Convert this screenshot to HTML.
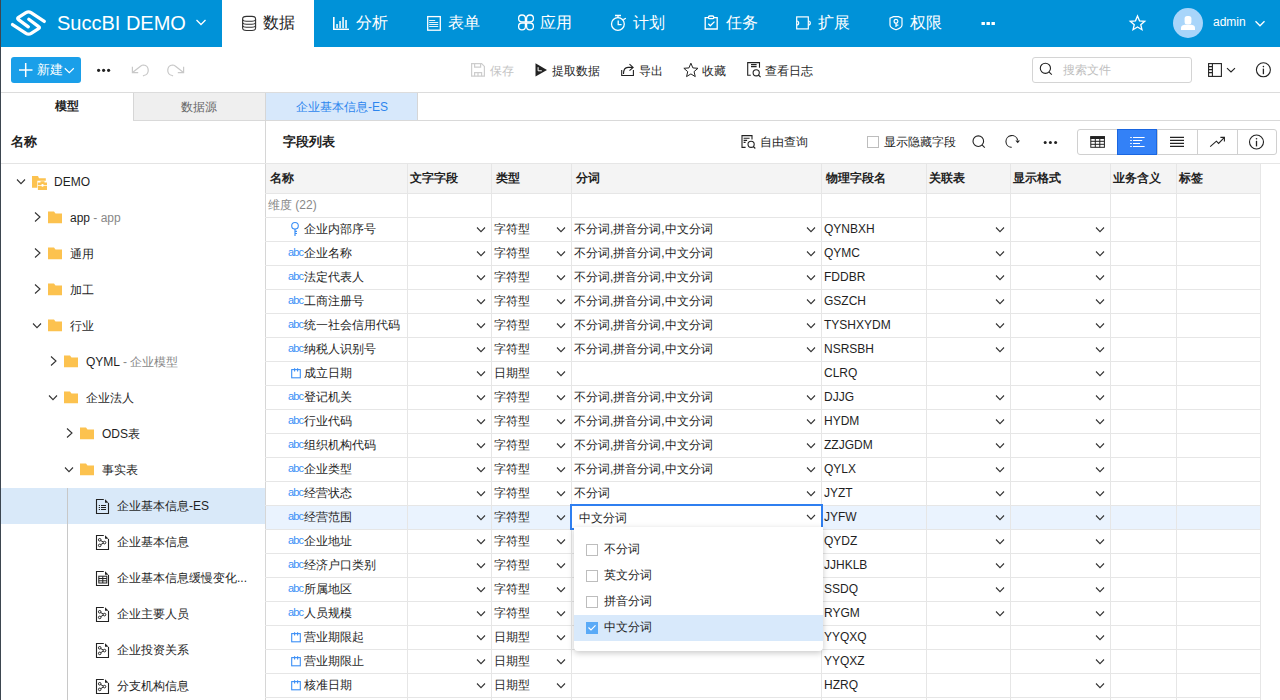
<!DOCTYPE html><html><head><meta charset="utf-8"><style>
*{box-sizing:border-box;margin:0;padding:0}
html,body{width:1280px;height:700px;overflow:hidden;background:#fff;font-family:"Liberation Sans",sans-serif;color:#1f1f1f}
.ab{position:absolute}
.t{position:absolute;white-space:nowrap;font-size:12px;line-height:17px}
svg{display:block}
</style></head><body>
<div class="ab" style="left:0;top:0;width:1280px;height:47px;background:#0092d8"></div>
<div class="t" style="left:57px;top:10px;font-size:20px;line-height:26px;color:#fff">SuccBI DEMO</div>
<div class="ab" style="left:222px;top:0;width:92px;height:47px;background:#fff"></div>
<div class="t" style="left:263px;top:12px;font-size:16px;line-height:22px;color:#222">数据</div>
<div class="t" style="left:356px;top:12px;font-size:16px;line-height:22px;color:#fff">分析</div>
<div class="t" style="left:448px;top:12px;font-size:16px;line-height:22px;color:#fff">表单</div>
<div class="t" style="left:540px;top:12px;font-size:16px;line-height:22px;color:#fff">应用</div>
<div class="t" style="left:633px;top:12px;font-size:16px;line-height:22px;color:#fff">计划</div>
<div class="t" style="left:726px;top:12px;font-size:16px;line-height:22px;color:#fff">任务</div>
<div class="t" style="left:818px;top:12px;font-size:16px;line-height:22px;color:#fff">扩展</div>
<div class="t" style="left:910px;top:12px;font-size:16px;line-height:22px;color:#fff">权限</div>
<div class="ab" style="left:1173px;top:8px;width:30px;height:30px;border-radius:50%;background:#a8d5fa"></div>
<div class="t" style="left:1213px;top:14px;font-size:12px;line-height:16px;color:#fff">admin</div>
<div class="ab" style="left:0;top:92px;width:1280px;height:1px;background:#dcdcdc"></div>
<div class="ab" style="left:11px;top:57px;width:70px;height:26px;border-radius:3px;background:#1a9fe9"></div>
<div class="t" style="left:37px;top:61px;font-size:13px;line-height:17px;color:#fff">新建</div>
<div class="t" style="left:490px;top:63px;color:#c4c4c4">保存</div>
<div class="t" style="left:552px;top:63px;color:#1f1f1f">提取数据</div>
<div class="t" style="left:639px;top:63px;color:#1f1f1f">导出</div>
<div class="t" style="left:702px;top:63px;color:#1f1f1f">收藏</div>
<div class="t" style="left:765px;top:63px;color:#1f1f1f">查看日志</div>
<div class="ab" style="left:1032px;top:57px;width:160px;height:26px;border:1px solid #d4d4d4;border-radius:3px"></div>
<div class="t" style="left:1063px;top:62px;color:#c0c0c0">搜索文件</div>
<div class="ab" style="left:133px;top:93px;width:132px;height:28px;background:#efefef;border-left:1px solid #d6d6d6;border-bottom:1px solid #d6d6d6"></div>
<div class="t" style="left:55px;top:98px;font-weight:bold;color:#222">模型</div>
<div class="t" style="left:181px;top:99px;color:#666">数据源</div>
<div class="t" style="left:11px;top:133px;font-size:13px;font-weight:bold;color:#222">名称</div>
<div class="ab" style="left:0;top:163px;width:265px;height:1px;background:#e4e4e4"></div>
<div class="ab" style="left:1px;top:488px;width:264px;height:36px;background:#d9e9f9"></div>
<div class="ab" style="left:67px;top:488px;width:1px;height:212px;background:#c8c8c8"></div>
<div class="t" style="left:54px;top:174px;">DEMO</div>
<div class="t" style="left:70px;top:210px;">app<span style="color:#888"> - app</span></div>
<div class="t" style="left:70px;top:246px;">通用</div>
<div class="t" style="left:70px;top:282px;">加工</div>
<div class="t" style="left:70px;top:318px;">行业</div>
<div class="t" style="left:86px;top:354px;">QYML<span style="color:#888"> - 企业模型</span></div>
<div class="t" style="left:86px;top:390px;">企业法人</div>
<div class="t" style="left:102px;top:426px;">ODS表</div>
<div class="t" style="left:102px;top:462px;">事实表</div>
<div class="t" style="left:117px;top:498px;">企业基本信息-ES</div>
<div class="t" style="left:117px;top:534px;">企业基本信息</div>
<div class="t" style="left:117px;top:570px;">企业基本信息缓慢变化...</div>
<div class="t" style="left:117px;top:606px;">企业主要人员</div>
<div class="t" style="left:117px;top:642px;">企业投资关系</div>
<div class="t" style="left:117px;top:678px;">分支机构信息</div>
<div class="ab" style="left:265px;top:93px;width:153px;height:27px;background:#d7e8fb;border-right:1px solid #d6d6d6"></div>
<div class="t" style="left:296px;top:99px;color:#2d86ee">企业基本信息-ES</div>
<div class="ab" style="left:133px;top:120px;width:1147px;height:1px;background:#d9d9d9"></div>
<div class="ab" style="left:265px;top:93px;width:1px;height:607px;background:#d6d6d6"></div>
<div class="t" style="left:283px;top:133px;font-size:13px;font-weight:bold;color:#222">字段列表</div>
<div class="t" style="left:760px;top:134px">自由查询</div>
<div class="ab" style="left:867px;top:136px;width:12px;height:12px;border:1px solid #bdbdbd"></div>
<div class="t" style="left:884px;top:134px">显示隐藏字段</div>
<div class="ab" style="left:1077px;top:129px;width:200px;height:26px;border:1px solid #d0d0d0;border-radius:3px"></div>
<div class="ab" style="left:1157px;top:129px;width:1px;height:26px;background:#d0d0d0"></div>
<div class="ab" style="left:1197px;top:129px;width:1px;height:26px;background:#d0d0d0"></div>
<div class="ab" style="left:1237px;top:129px;width:1px;height:26px;background:#d0d0d0"></div>
<div class="ab" style="left:1117px;top:129px;width:40px;height:26px;background:#3381f7;border:1px solid #1a66e0"></div>
<div class="ab" style="left:265px;top:163px;width:1015px;height:1px;background:#e6e6e6"></div>
<div class="ab" style="left:266px;top:164px;width:994px;height:29px;background:#f4f4f4"></div>
<div class="ab" style="left:266px;top:505px;width:994px;height:24px;background:#eaf3fe"></div>
<div class="ab" style="left:407px;top:164px;width:1px;height:536px;background:#e6e6e6"></div>
<div class="ab" style="left:491px;top:164px;width:1px;height:536px;background:#e6e6e6"></div>
<div class="ab" style="left:571px;top:164px;width:1px;height:536px;background:#e6e6e6"></div>
<div class="ab" style="left:821px;top:164px;width:1px;height:536px;background:#e6e6e6"></div>
<div class="ab" style="left:926px;top:164px;width:1px;height:536px;background:#e6e6e6"></div>
<div class="ab" style="left:1010px;top:164px;width:1px;height:536px;background:#e6e6e6"></div>
<div class="ab" style="left:1110px;top:164px;width:1px;height:536px;background:#e6e6e6"></div>
<div class="ab" style="left:1176px;top:164px;width:1px;height:536px;background:#e6e6e6"></div>
<div class="ab" style="left:1260px;top:164px;width:1px;height:536px;background:#e6e6e6"></div>
<div class="ab" style="left:265px;top:193px;width:995px;height:1px;background:#e6e6e6"></div>
<div class="ab" style="left:265px;top:217px;width:995px;height:1px;background:#e6e6e6"></div>
<div class="ab" style="left:265px;top:241px;width:995px;height:1px;background:#e6e6e6"></div>
<div class="ab" style="left:265px;top:265px;width:995px;height:1px;background:#e6e6e6"></div>
<div class="ab" style="left:265px;top:289px;width:995px;height:1px;background:#e6e6e6"></div>
<div class="ab" style="left:265px;top:313px;width:995px;height:1px;background:#e6e6e6"></div>
<div class="ab" style="left:265px;top:337px;width:995px;height:1px;background:#e6e6e6"></div>
<div class="ab" style="left:265px;top:361px;width:995px;height:1px;background:#e6e6e6"></div>
<div class="ab" style="left:265px;top:385px;width:995px;height:1px;background:#e6e6e6"></div>
<div class="ab" style="left:265px;top:409px;width:995px;height:1px;background:#e6e6e6"></div>
<div class="ab" style="left:265px;top:433px;width:995px;height:1px;background:#e6e6e6"></div>
<div class="ab" style="left:265px;top:457px;width:995px;height:1px;background:#e6e6e6"></div>
<div class="ab" style="left:265px;top:481px;width:995px;height:1px;background:#e6e6e6"></div>
<div class="ab" style="left:265px;top:505px;width:995px;height:1px;background:#e6e6e6"></div>
<div class="ab" style="left:265px;top:529px;width:995px;height:1px;background:#e6e6e6"></div>
<div class="ab" style="left:265px;top:553px;width:995px;height:1px;background:#e6e6e6"></div>
<div class="ab" style="left:265px;top:577px;width:995px;height:1px;background:#e6e6e6"></div>
<div class="ab" style="left:265px;top:601px;width:995px;height:1px;background:#e6e6e6"></div>
<div class="ab" style="left:265px;top:625px;width:995px;height:1px;background:#e6e6e6"></div>
<div class="ab" style="left:265px;top:649px;width:995px;height:1px;background:#e6e6e6"></div>
<div class="ab" style="left:265px;top:673px;width:995px;height:1px;background:#e6e6e6"></div>
<div class="ab" style="left:265px;top:697px;width:995px;height:1px;background:#e6e6e6"></div>
<div class="t" style="left:270px;top:170px;font-weight:bold;color:#222">名称</div>
<div class="t" style="left:410px;top:170px;font-weight:bold;color:#222">文字字段</div>
<div class="t" style="left:496px;top:170px;font-weight:bold;color:#222">类型</div>
<div class="t" style="left:576px;top:170px;font-weight:bold;color:#222">分词</div>
<div class="t" style="left:826px;top:170px;font-weight:bold;color:#222">物理字段名</div>
<div class="t" style="left:929px;top:170px;font-weight:bold;color:#222">关联表</div>
<div class="t" style="left:1013px;top:170px;font-weight:bold;color:#222">显示格式</div>
<div class="t" style="left:1113px;top:170px;font-weight:bold;color:#222">业务含义</div>
<div class="t" style="left:1179px;top:170px;font-weight:bold;color:#222">标签</div>
<div class="t" style="left:268px;top:197px;color:#888">维度 (22)</div>
<div class="t" style="left:304px;top:221px">企业内部序号</div>
<div class="t" style="left:494px;top:221px">字符型</div>
<div class="t" style="left:574px;top:221px">不分词,拼音分词,中文分词</div>
<div class="t" style="left:824px;top:221px">QYNBXH</div>
<div class="t" style="left:304px;top:245px">企业名称</div>
<div class="t" style="left:494px;top:245px">字符型</div>
<div class="t" style="left:574px;top:245px">不分词,拼音分词,中文分词</div>
<div class="t" style="left:824px;top:245px">QYMC</div>
<div class="t" style="left:288px;top:245px;font-size:11px;line-height:14px;color:#3b8ff6;letter-spacing:-0.9px">abc</div>
<div class="t" style="left:304px;top:269px">法定代表人</div>
<div class="t" style="left:494px;top:269px">字符型</div>
<div class="t" style="left:574px;top:269px">不分词,拼音分词,中文分词</div>
<div class="t" style="left:824px;top:269px">FDDBR</div>
<div class="t" style="left:288px;top:269px;font-size:11px;line-height:14px;color:#3b8ff6;letter-spacing:-0.9px">abc</div>
<div class="t" style="left:304px;top:293px">工商注册号</div>
<div class="t" style="left:494px;top:293px">字符型</div>
<div class="t" style="left:574px;top:293px">不分词,拼音分词,中文分词</div>
<div class="t" style="left:824px;top:293px">GSZCH</div>
<div class="t" style="left:288px;top:293px;font-size:11px;line-height:14px;color:#3b8ff6;letter-spacing:-0.9px">abc</div>
<div class="t" style="left:304px;top:317px">统一社会信用代码</div>
<div class="t" style="left:494px;top:317px">字符型</div>
<div class="t" style="left:574px;top:317px">不分词,拼音分词,中文分词</div>
<div class="t" style="left:824px;top:317px">TYSHXYDM</div>
<div class="t" style="left:288px;top:317px;font-size:11px;line-height:14px;color:#3b8ff6;letter-spacing:-0.9px">abc</div>
<div class="t" style="left:304px;top:341px">纳税人识别号</div>
<div class="t" style="left:494px;top:341px">字符型</div>
<div class="t" style="left:574px;top:341px">不分词,拼音分词,中文分词</div>
<div class="t" style="left:824px;top:341px">NSRSBH</div>
<div class="t" style="left:288px;top:341px;font-size:11px;line-height:14px;color:#3b8ff6;letter-spacing:-0.9px">abc</div>
<div class="t" style="left:304px;top:365px">成立日期</div>
<div class="t" style="left:494px;top:365px">日期型</div>
<div class="t" style="left:824px;top:365px">CLRQ</div>
<div class="t" style="left:304px;top:389px">登记机关</div>
<div class="t" style="left:494px;top:389px">字符型</div>
<div class="t" style="left:574px;top:389px">不分词,拼音分词,中文分词</div>
<div class="t" style="left:824px;top:389px">DJJG</div>
<div class="t" style="left:288px;top:389px;font-size:11px;line-height:14px;color:#3b8ff6;letter-spacing:-0.9px">abc</div>
<div class="t" style="left:304px;top:413px">行业代码</div>
<div class="t" style="left:494px;top:413px">字符型</div>
<div class="t" style="left:574px;top:413px">不分词,拼音分词,中文分词</div>
<div class="t" style="left:824px;top:413px">HYDM</div>
<div class="t" style="left:288px;top:413px;font-size:11px;line-height:14px;color:#3b8ff6;letter-spacing:-0.9px">abc</div>
<div class="t" style="left:304px;top:437px">组织机构代码</div>
<div class="t" style="left:494px;top:437px">字符型</div>
<div class="t" style="left:574px;top:437px">不分词,拼音分词,中文分词</div>
<div class="t" style="left:824px;top:437px">ZZJGDM</div>
<div class="t" style="left:288px;top:437px;font-size:11px;line-height:14px;color:#3b8ff6;letter-spacing:-0.9px">abc</div>
<div class="t" style="left:304px;top:461px">企业类型</div>
<div class="t" style="left:494px;top:461px">字符型</div>
<div class="t" style="left:574px;top:461px">不分词,拼音分词,中文分词</div>
<div class="t" style="left:824px;top:461px">QYLX</div>
<div class="t" style="left:288px;top:461px;font-size:11px;line-height:14px;color:#3b8ff6;letter-spacing:-0.9px">abc</div>
<div class="t" style="left:304px;top:485px">经营状态</div>
<div class="t" style="left:494px;top:485px">字符型</div>
<div class="t" style="left:574px;top:485px">不分词</div>
<div class="t" style="left:824px;top:485px">JYZT</div>
<div class="t" style="left:288px;top:485px;font-size:11px;line-height:14px;color:#3b8ff6;letter-spacing:-0.9px">abc</div>
<div class="t" style="left:304px;top:509px">经营范围</div>
<div class="t" style="left:494px;top:509px">字符型</div>
<div class="t" style="left:824px;top:509px">JYFW</div>
<div class="t" style="left:288px;top:509px;font-size:11px;line-height:14px;color:#3b8ff6;letter-spacing:-0.9px">abc</div>
<div class="t" style="left:304px;top:533px">企业地址</div>
<div class="t" style="left:494px;top:533px">字符型</div>
<div class="t" style="left:824px;top:533px">QYDZ</div>
<div class="t" style="left:288px;top:533px;font-size:11px;line-height:14px;color:#3b8ff6;letter-spacing:-0.9px">abc</div>
<div class="t" style="left:304px;top:557px">经济户口类别</div>
<div class="t" style="left:494px;top:557px">字符型</div>
<div class="t" style="left:824px;top:557px">JJHKLB</div>
<div class="t" style="left:288px;top:557px;font-size:11px;line-height:14px;color:#3b8ff6;letter-spacing:-0.9px">abc</div>
<div class="t" style="left:304px;top:581px">所属地区</div>
<div class="t" style="left:494px;top:581px">字符型</div>
<div class="t" style="left:824px;top:581px">SSDQ</div>
<div class="t" style="left:288px;top:581px;font-size:11px;line-height:14px;color:#3b8ff6;letter-spacing:-0.9px">abc</div>
<div class="t" style="left:304px;top:605px">人员规模</div>
<div class="t" style="left:494px;top:605px">字符型</div>
<div class="t" style="left:824px;top:605px">RYGM</div>
<div class="t" style="left:288px;top:605px;font-size:11px;line-height:14px;color:#3b8ff6;letter-spacing:-0.9px">abc</div>
<div class="t" style="left:304px;top:629px">营业期限起</div>
<div class="t" style="left:494px;top:629px">日期型</div>
<div class="t" style="left:824px;top:629px">YYQXQ</div>
<div class="t" style="left:304px;top:653px">营业期限止</div>
<div class="t" style="left:494px;top:653px">日期型</div>
<div class="t" style="left:824px;top:653px">YYQXZ</div>
<div class="t" style="left:304px;top:677px">核准日期</div>
<div class="t" style="left:494px;top:677px">日期型</div>
<div class="t" style="left:824px;top:677px">HZRQ</div>
<svg class="ab" style="left:0;top:0" width="1280" height="700" viewBox="0 0 1280 700"><path d="M17.00 179.50 L21.00 183.70 L25.00 179.50" fill="none" stroke="#333" stroke-width="1.1"/><path d="M32 176 h6 l1 2.2 h6.8 v2.6 h-8.5 v7 h-5.3 z" fill="#fcc24f"/><path d="M40.5 181.2 h4 v1.3 h2.5 v2.6 h-3.3 a1 1 0 0 0 -2.4 0 h-3.4 v-2.6 h2.6 z M37.9 185.7 h3.5 a1.1 1.1 0 0 0 2.2 0 h3.4 v4.2 h-9.1 z" fill="#fcc24f"/><path d="M35.00 212.50 L40.00 217.00 L35.00 221.50" fill="none" stroke="#333" stroke-width="1.1"/><path d="M48.0 211.5 h6 l1.5 2 h6.5 v9.8 h-14 z" fill="#fcc24f"/><path d="M35.00 248.50 L40.00 253.00 L35.00 257.50" fill="none" stroke="#333" stroke-width="1.1"/><path d="M48.0 247.5 h6 l1.5 2 h6.5 v9.8 h-14 z" fill="#fcc24f"/><path d="M35.00 284.50 L40.00 289.00 L35.00 293.50" fill="none" stroke="#333" stroke-width="1.1"/><path d="M48.0 283.5 h6 l1.5 2 h6.5 v9.8 h-14 z" fill="#fcc24f"/><path d="M33.00 323.50 L37.00 327.70 L41.00 323.50" fill="none" stroke="#333" stroke-width="1.1"/><path d="M48.0 319.5 h6 l1.5 2 h6.5 v9.8 h-14 z" fill="#fcc24f"/><path d="M51.00 356.50 L56.00 361.00 L51.00 365.50" fill="none" stroke="#333" stroke-width="1.1"/><path d="M64.0 355.5 h6 l1.5 2 h6.5 v9.8 h-14 z" fill="#fcc24f"/><path d="M49.00 395.50 L53.00 399.70 L57.00 395.50" fill="none" stroke="#333" stroke-width="1.1"/><path d="M64.0 391.5 h6 l1.5 2 h6.5 v9.8 h-14 z" fill="#fcc24f"/><path d="M67.00 428.50 L72.00 433.00 L67.00 437.50" fill="none" stroke="#333" stroke-width="1.1"/><path d="M80.0 427.5 h6 l1.5 2 h6.5 v9.8 h-14 z" fill="#fcc24f"/><path d="M65.00 467.50 L69.00 471.70 L73.00 467.50" fill="none" stroke="#333" stroke-width="1.1"/><path d="M80.0 463.5 h6 l1.5 2 h6.5 v9.8 h-14 z" fill="#fcc24f"/><path d="M103.8 499.5 H96.5 V513.5 H108.5 V503.0" fill="none" stroke="#222" stroke-width="1.1"/><path d="M105 499.3 V502.8 H108.6 Z" fill="#222"/><path d="M98.8 505.5 h1.2 M101 505.5 h5" stroke="#222" stroke-width="1"/><path d="M98.8 507.5 h1.2 M101 507.5 h5" stroke="#222" stroke-width="1"/><path d="M98.8 509.5 h1.2 M101 509.5 h5" stroke="#222" stroke-width="1"/><path d="M103.8 535.5 H96.5 V549.5 H108.5 V539.0" fill="none" stroke="#222" stroke-width="1.1"/><path d="M105 535.3 V538.8 H108.6 Z" fill="#222"/><circle cx="99.7" cy="539.8" r="1.3" fill="none" stroke="#222" stroke-width="1"/><circle cx="99.7" cy="545.4" r="1.3" fill="none" stroke="#222" stroke-width="1"/><circle cx="104.5" cy="542.6" r="1.3" fill="none" stroke="#222" stroke-width="1"/><path d="M100.8 540.6 L103.2 542.0 M100.8 544.6 L103.2 543.2" stroke="#222" stroke-width="1"/><path d="M103.8 571.5 H96.5 V585.5 H108.5 V575.0" fill="none" stroke="#222" stroke-width="1.1"/><path d="M105 571.3 V574.8 H108.6 Z" fill="#222"/><rect x="98.8" y="576.2" width="8" height="6.8" fill="none" stroke="#222" stroke-width="1"/><path d="M98.8 578.5 h8 M98.8 580.8 h8 M102.8 576.2 v6.8" stroke="#222" stroke-width="1"/><path d="M103.8 607.5 H96.5 V621.5 H108.5 V611.0" fill="none" stroke="#222" stroke-width="1.1"/><path d="M105 607.3 V610.8 H108.6 Z" fill="#222"/><circle cx="99.7" cy="611.8" r="1.3" fill="none" stroke="#222" stroke-width="1"/><circle cx="99.7" cy="617.4" r="1.3" fill="none" stroke="#222" stroke-width="1"/><circle cx="104.5" cy="614.6" r="1.3" fill="none" stroke="#222" stroke-width="1"/><path d="M100.8 612.6 L103.2 614.0 M100.8 616.6 L103.2 615.2" stroke="#222" stroke-width="1"/><path d="M103.8 643.5 H96.5 V657.5 H108.5 V647.0" fill="none" stroke="#222" stroke-width="1.1"/><path d="M105 643.3 V646.8 H108.6 Z" fill="#222"/><circle cx="99.7" cy="647.8" r="1.3" fill="none" stroke="#222" stroke-width="1"/><circle cx="99.7" cy="653.4" r="1.3" fill="none" stroke="#222" stroke-width="1"/><circle cx="104.5" cy="650.6" r="1.3" fill="none" stroke="#222" stroke-width="1"/><path d="M100.8 648.6 L103.2 650.0 M100.8 652.6 L103.2 651.2" stroke="#222" stroke-width="1"/><path d="M103.8 679.5 H96.5 V693.5 H108.5 V683.0" fill="none" stroke="#222" stroke-width="1.1"/><path d="M105 679.3 V682.8 H108.6 Z" fill="#222"/><circle cx="99.7" cy="683.8" r="1.3" fill="none" stroke="#222" stroke-width="1"/><circle cx="99.7" cy="689.4" r="1.3" fill="none" stroke="#222" stroke-width="1"/><circle cx="104.5" cy="686.6" r="1.3" fill="none" stroke="#222" stroke-width="1"/><path d="M100.8 684.6 L103.2 686.0 M100.8 688.6 L103.2 687.2" stroke="#222" stroke-width="1"/><path d="M477.00 227.50 L481.00 231.70 L485.00 227.50" fill="none" stroke="#333" stroke-width="1.1"/><path d="M557.00 227.50 L561.00 231.70 L565.00 227.50" fill="none" stroke="#333" stroke-width="1.1"/><path d="M807.00 227.50 L811.00 231.70 L815.00 227.50" fill="none" stroke="#333" stroke-width="1.1"/><path d="M996.00 227.50 L1000.00 231.70 L1004.00 227.50" fill="none" stroke="#333" stroke-width="1.1"/><path d="M1096.00 227.50 L1100.00 231.70 L1104.00 227.50" fill="none" stroke="#333" stroke-width="1.1"/><circle cx="295" cy="225.8" r="3.3" fill="none" stroke="#3b8ff6" stroke-width="1.1"/><path d="M295 229.1 V235.9 M295 231.4 h2 M295 233.5 h2" stroke="#3b8ff6" stroke-width="1.2"/><path d="M477.00 251.50 L481.00 255.70 L485.00 251.50" fill="none" stroke="#333" stroke-width="1.1"/><path d="M557.00 251.50 L561.00 255.70 L565.00 251.50" fill="none" stroke="#333" stroke-width="1.1"/><path d="M807.00 251.50 L811.00 255.70 L815.00 251.50" fill="none" stroke="#333" stroke-width="1.1"/><path d="M996.00 251.50 L1000.00 255.70 L1004.00 251.50" fill="none" stroke="#333" stroke-width="1.1"/><path d="M1096.00 251.50 L1100.00 255.70 L1104.00 251.50" fill="none" stroke="#333" stroke-width="1.1"/><path d="M477.00 275.50 L481.00 279.70 L485.00 275.50" fill="none" stroke="#333" stroke-width="1.1"/><path d="M557.00 275.50 L561.00 279.70 L565.00 275.50" fill="none" stroke="#333" stroke-width="1.1"/><path d="M807.00 275.50 L811.00 279.70 L815.00 275.50" fill="none" stroke="#333" stroke-width="1.1"/><path d="M996.00 275.50 L1000.00 279.70 L1004.00 275.50" fill="none" stroke="#333" stroke-width="1.1"/><path d="M1096.00 275.50 L1100.00 279.70 L1104.00 275.50" fill="none" stroke="#333" stroke-width="1.1"/><path d="M477.00 299.50 L481.00 303.70 L485.00 299.50" fill="none" stroke="#333" stroke-width="1.1"/><path d="M557.00 299.50 L561.00 303.70 L565.00 299.50" fill="none" stroke="#333" stroke-width="1.1"/><path d="M807.00 299.50 L811.00 303.70 L815.00 299.50" fill="none" stroke="#333" stroke-width="1.1"/><path d="M996.00 299.50 L1000.00 303.70 L1004.00 299.50" fill="none" stroke="#333" stroke-width="1.1"/><path d="M1096.00 299.50 L1100.00 303.70 L1104.00 299.50" fill="none" stroke="#333" stroke-width="1.1"/><path d="M477.00 323.50 L481.00 327.70 L485.00 323.50" fill="none" stroke="#333" stroke-width="1.1"/><path d="M557.00 323.50 L561.00 327.70 L565.00 323.50" fill="none" stroke="#333" stroke-width="1.1"/><path d="M807.00 323.50 L811.00 327.70 L815.00 323.50" fill="none" stroke="#333" stroke-width="1.1"/><path d="M996.00 323.50 L1000.00 327.70 L1004.00 323.50" fill="none" stroke="#333" stroke-width="1.1"/><path d="M1096.00 323.50 L1100.00 327.70 L1104.00 323.50" fill="none" stroke="#333" stroke-width="1.1"/><path d="M477.00 347.50 L481.00 351.70 L485.00 347.50" fill="none" stroke="#333" stroke-width="1.1"/><path d="M557.00 347.50 L561.00 351.70 L565.00 347.50" fill="none" stroke="#333" stroke-width="1.1"/><path d="M807.00 347.50 L811.00 351.70 L815.00 347.50" fill="none" stroke="#333" stroke-width="1.1"/><path d="M996.00 347.50 L1000.00 351.70 L1004.00 347.50" fill="none" stroke="#333" stroke-width="1.1"/><path d="M1096.00 347.50 L1100.00 351.70 L1104.00 347.50" fill="none" stroke="#333" stroke-width="1.1"/><path d="M477.00 371.50 L481.00 375.70 L485.00 371.50" fill="none" stroke="#333" stroke-width="1.1"/><path d="M557.00 371.50 L561.00 375.70 L565.00 371.50" fill="none" stroke="#333" stroke-width="1.1"/><path d="M1096.00 371.50 L1100.00 375.70 L1104.00 371.50" fill="none" stroke="#333" stroke-width="1.1"/><rect x="291.7" y="369.6" width="8.6" height="8.2" fill="none" stroke="#3b8ff6" stroke-width="1.1"/><path d="M294.6 368.2 v3.4 M297.6 368.2 v3.4" stroke="#3b8ff6" stroke-width="1.1"/><path d="M477.00 395.50 L481.00 399.70 L485.00 395.50" fill="none" stroke="#333" stroke-width="1.1"/><path d="M557.00 395.50 L561.00 399.70 L565.00 395.50" fill="none" stroke="#333" stroke-width="1.1"/><path d="M807.00 395.50 L811.00 399.70 L815.00 395.50" fill="none" stroke="#333" stroke-width="1.1"/><path d="M996.00 395.50 L1000.00 399.70 L1004.00 395.50" fill="none" stroke="#333" stroke-width="1.1"/><path d="M1096.00 395.50 L1100.00 399.70 L1104.00 395.50" fill="none" stroke="#333" stroke-width="1.1"/><path d="M477.00 419.50 L481.00 423.70 L485.00 419.50" fill="none" stroke="#333" stroke-width="1.1"/><path d="M557.00 419.50 L561.00 423.70 L565.00 419.50" fill="none" stroke="#333" stroke-width="1.1"/><path d="M807.00 419.50 L811.00 423.70 L815.00 419.50" fill="none" stroke="#333" stroke-width="1.1"/><path d="M996.00 419.50 L1000.00 423.70 L1004.00 419.50" fill="none" stroke="#333" stroke-width="1.1"/><path d="M1096.00 419.50 L1100.00 423.70 L1104.00 419.50" fill="none" stroke="#333" stroke-width="1.1"/><path d="M477.00 443.50 L481.00 447.70 L485.00 443.50" fill="none" stroke="#333" stroke-width="1.1"/><path d="M557.00 443.50 L561.00 447.70 L565.00 443.50" fill="none" stroke="#333" stroke-width="1.1"/><path d="M807.00 443.50 L811.00 447.70 L815.00 443.50" fill="none" stroke="#333" stroke-width="1.1"/><path d="M996.00 443.50 L1000.00 447.70 L1004.00 443.50" fill="none" stroke="#333" stroke-width="1.1"/><path d="M1096.00 443.50 L1100.00 447.70 L1104.00 443.50" fill="none" stroke="#333" stroke-width="1.1"/><path d="M477.00 467.50 L481.00 471.70 L485.00 467.50" fill="none" stroke="#333" stroke-width="1.1"/><path d="M557.00 467.50 L561.00 471.70 L565.00 467.50" fill="none" stroke="#333" stroke-width="1.1"/><path d="M807.00 467.50 L811.00 471.70 L815.00 467.50" fill="none" stroke="#333" stroke-width="1.1"/><path d="M996.00 467.50 L1000.00 471.70 L1004.00 467.50" fill="none" stroke="#333" stroke-width="1.1"/><path d="M1096.00 467.50 L1100.00 471.70 L1104.00 467.50" fill="none" stroke="#333" stroke-width="1.1"/><path d="M477.00 491.50 L481.00 495.70 L485.00 491.50" fill="none" stroke="#333" stroke-width="1.1"/><path d="M557.00 491.50 L561.00 495.70 L565.00 491.50" fill="none" stroke="#333" stroke-width="1.1"/><path d="M807.00 491.50 L811.00 495.70 L815.00 491.50" fill="none" stroke="#333" stroke-width="1.1"/><path d="M996.00 491.50 L1000.00 495.70 L1004.00 491.50" fill="none" stroke="#333" stroke-width="1.1"/><path d="M1096.00 491.50 L1100.00 495.70 L1104.00 491.50" fill="none" stroke="#333" stroke-width="1.1"/><path d="M477.00 515.50 L481.00 519.70 L485.00 515.50" fill="none" stroke="#333" stroke-width="1.1"/><path d="M557.00 515.50 L561.00 519.70 L565.00 515.50" fill="none" stroke="#333" stroke-width="1.1"/><path d="M996.00 515.50 L1000.00 519.70 L1004.00 515.50" fill="none" stroke="#333" stroke-width="1.1"/><path d="M1096.00 515.50 L1100.00 519.70 L1104.00 515.50" fill="none" stroke="#333" stroke-width="1.1"/><path d="M477.00 539.50 L481.00 543.70 L485.00 539.50" fill="none" stroke="#333" stroke-width="1.1"/><path d="M557.00 539.50 L561.00 543.70 L565.00 539.50" fill="none" stroke="#333" stroke-width="1.1"/><path d="M807.00 539.50 L811.00 543.70 L815.00 539.50" fill="none" stroke="#333" stroke-width="1.1"/><path d="M996.00 539.50 L1000.00 543.70 L1004.00 539.50" fill="none" stroke="#333" stroke-width="1.1"/><path d="M1096.00 539.50 L1100.00 543.70 L1104.00 539.50" fill="none" stroke="#333" stroke-width="1.1"/><path d="M477.00 563.50 L481.00 567.70 L485.00 563.50" fill="none" stroke="#333" stroke-width="1.1"/><path d="M557.00 563.50 L561.00 567.70 L565.00 563.50" fill="none" stroke="#333" stroke-width="1.1"/><path d="M807.00 563.50 L811.00 567.70 L815.00 563.50" fill="none" stroke="#333" stroke-width="1.1"/><path d="M996.00 563.50 L1000.00 567.70 L1004.00 563.50" fill="none" stroke="#333" stroke-width="1.1"/><path d="M1096.00 563.50 L1100.00 567.70 L1104.00 563.50" fill="none" stroke="#333" stroke-width="1.1"/><path d="M477.00 587.50 L481.00 591.70 L485.00 587.50" fill="none" stroke="#333" stroke-width="1.1"/><path d="M557.00 587.50 L561.00 591.70 L565.00 587.50" fill="none" stroke="#333" stroke-width="1.1"/><path d="M807.00 587.50 L811.00 591.70 L815.00 587.50" fill="none" stroke="#333" stroke-width="1.1"/><path d="M996.00 587.50 L1000.00 591.70 L1004.00 587.50" fill="none" stroke="#333" stroke-width="1.1"/><path d="M1096.00 587.50 L1100.00 591.70 L1104.00 587.50" fill="none" stroke="#333" stroke-width="1.1"/><path d="M477.00 611.50 L481.00 615.70 L485.00 611.50" fill="none" stroke="#333" stroke-width="1.1"/><path d="M557.00 611.50 L561.00 615.70 L565.00 611.50" fill="none" stroke="#333" stroke-width="1.1"/><path d="M807.00 611.50 L811.00 615.70 L815.00 611.50" fill="none" stroke="#333" stroke-width="1.1"/><path d="M996.00 611.50 L1000.00 615.70 L1004.00 611.50" fill="none" stroke="#333" stroke-width="1.1"/><path d="M1096.00 611.50 L1100.00 615.70 L1104.00 611.50" fill="none" stroke="#333" stroke-width="1.1"/><path d="M477.00 635.50 L481.00 639.70 L485.00 635.50" fill="none" stroke="#333" stroke-width="1.1"/><path d="M557.00 635.50 L561.00 639.70 L565.00 635.50" fill="none" stroke="#333" stroke-width="1.1"/><path d="M1096.00 635.50 L1100.00 639.70 L1104.00 635.50" fill="none" stroke="#333" stroke-width="1.1"/><rect x="291.7" y="633.6" width="8.6" height="8.2" fill="none" stroke="#3b8ff6" stroke-width="1.1"/><path d="M294.6 632.2 v3.4 M297.6 632.2 v3.4" stroke="#3b8ff6" stroke-width="1.1"/><path d="M477.00 659.50 L481.00 663.70 L485.00 659.50" fill="none" stroke="#333" stroke-width="1.1"/><path d="M557.00 659.50 L561.00 663.70 L565.00 659.50" fill="none" stroke="#333" stroke-width="1.1"/><path d="M1096.00 659.50 L1100.00 663.70 L1104.00 659.50" fill="none" stroke="#333" stroke-width="1.1"/><rect x="291.7" y="657.6" width="8.6" height="8.2" fill="none" stroke="#3b8ff6" stroke-width="1.1"/><path d="M294.6 656.2 v3.4 M297.6 656.2 v3.4" stroke="#3b8ff6" stroke-width="1.1"/><path d="M477.00 683.50 L481.00 687.70 L485.00 683.50" fill="none" stroke="#333" stroke-width="1.1"/><path d="M557.00 683.50 L561.00 687.70 L565.00 683.50" fill="none" stroke="#333" stroke-width="1.1"/><path d="M1096.00 683.50 L1100.00 687.70 L1104.00 683.50" fill="none" stroke="#333" stroke-width="1.1"/><rect x="291.7" y="681.6" width="8.6" height="8.2" fill="none" stroke="#3b8ff6" stroke-width="1.1"/><path d="M294.6 680.2 v3.4 M297.6 680.2 v3.4" stroke="#3b8ff6" stroke-width="1.1"/></svg>
<svg class="ab" style="left:0;top:0" width="1280" height="700" viewBox="0 0 1280 700"><g fill="none" stroke="#fff" stroke-width="3.3" stroke-linecap="round" stroke-linejoin="round"><path d="M44.3 21.4 L31 12.6 Q28.5 11 26 12.6 L18.5 17.4 Q16.9 18.4 18.5 19.6 L28.3 26.8"/><path d="M12.5 24.6 L26 33.3 Q28.6 35 31.2 33.3 L38.6 28.6 Q40.2 27.7 38.6 26.6 L28.8 19.2"/></g><path d="M196.50 20.00 L201.00 24.50 L205.50 20.00" fill="none" stroke="#fff" stroke-width="1.3"/><g fill="none" stroke="#333" stroke-width="1.1"><path d="M242.6 19 Q242.6 16.4 246.5 16.4 H252 Q255.6 16.4 255.6 19 V28 Q255.6 30.5 252 30.5 H246.5 Q242.6 30.5 242.6 28 Z"/><path d="M242.6 19.5 Q243 21.3 246.5 21.3 H252 Q255.3 21.3 255.6 19.5"/><path d="M242.6 22.5 Q243 24.3 246.5 24.3 H252 Q255.3 24.3 255.6 22.5"/><path d="M242.6 25.5 Q243 27.3 246.5 27.3 H252 Q255.3 27.3 255.6 25.5"/></g><g fill="#fff"><rect x="333" y="17" width="1.6" height="13"/><rect x="333" y="28.6" width="16" height="1.4"/><rect x="336.3" y="24" width="1.5" height="4.2"/><rect x="339.3" y="21" width="1.5" height="7.2"/><rect x="342.3" y="17" width="1.5" height="11.2"/><rect x="345.3" y="20" width="1.5" height="8.2"/></g><g fill="none" stroke="#fff" stroke-width="1.3"><rect x="427.7" y="16.6" width="12.6" height="13.6"/><path d="M429.2 20.5 h6 M429.2 22.5 h9 M429.2 24.5 h9 M429.2 26.5 h9" stroke-width="0.9"/></g><g fill="none" stroke="#fff" stroke-width="1.3"><path d="M525.4 21.8 H522 A3.4 3.4 0 1 1 525.4 18.4 Z"/><path d="M526.6 21.8 H530 A3.4 3.4 0 1 0 526.6 18.4 Z"/><path d="M525.4 23 H522 A3.4 3.4 0 1 0 525.4 26.4 Z"/><path d="M526.6 23 H530 A3.4 3.4 0 1 1 526.6 26.4 Z"/></g><g fill="none" stroke="#fff" stroke-width="1.3"><circle cx="617.9" cy="24" r="6.4"/><path d="M615 15.5 h6 M618 16 v1.5 M623.3 19.6 l2.6 -1.4 M618.2 20.6 v4 h3.4"/></g><g fill="none" stroke="#fff" stroke-width="1.3"><path d="M708.5 17.6 H705.2 V29 H717.2 V17.6 H713.8"/><rect x="708.5" y="16" width="5.3" height="2.6" rx="1.2"/><path d="M708.3 23.8 L710.3 25.8 L714.5 21.6"/></g><g fill="none" stroke="#fff" stroke-width="1.2"><rect x="796.7" y="16.9" width="11.6" height="12"/><path d="M796.7 21 A2 2 0 0 1 796.7 25 M808.3 21 A2 2 0 0 1 808.3 25"/></g><g fill="none" stroke="#fff" stroke-width="1.2"><path d="M893.5 16.7 H898.5 L902 18.2 V25 Q902 27.8 896 29.8 Q890 27.8 890 25 V18.2 Z"/><circle cx="896" cy="21.2" r="1.9"/><path d="M896 23.1 V27 M896 25.2 h2.4"/></g><g fill="#fff"><rect x="981.5" y="22" width="3.4" height="3"/><rect x="986.5" y="22" width="3.4" height="3"/><rect x="991.5" y="22" width="3.4" height="3"/></g><path d="M1137.50 16.00 L1139.51 20.83 L1144.73 21.25 L1140.75 24.66 L1141.97 29.75 L1137.50 27.02 L1133.03 29.75 L1134.25 24.66 L1130.27 21.25 L1135.49 20.83 Z" fill="none" stroke="#fff" stroke-width="1.3" stroke-linejoin="miter"/><rect x="1184.6" y="16" width="6.8" height="8.6" rx="2.5" fill="#fff"/><path d="M1181 30 V27.8 Q1181 25.3 1184.5 24.8 H1191.5 Q1195 25.3 1195 27.8 V30 Z" fill="#fff"/><path d="M1255.50 21.30 L1260.00 25.80 L1264.50 21.30" fill="none" stroke="#fff" stroke-width="1.3"/><path d="M25.7 63 V77 M19 70 H32.5" stroke="#fff" stroke-width="1.5"/><path d="M64.80 68.20 L69.30 72.60 L73.80 68.20" fill="none" stroke="#fff" stroke-width="1.2"/><g fill="#222"><circle cx="98.6" cy="70.3" r="1.6"/><circle cx="103.6" cy="70.3" r="1.6"/><circle cx="108.6" cy="70.3" r="1.6"/></g><g fill="none" stroke="#c8c8c8" stroke-width="1.2"><path d="M132.5 72.5 L140.5 66.2 Q142 65 143.5 65 A5.3 5.3 0 0 1 143.8 75.5 L143 76"/><path d="M132.4 66.8 V72.6 H138.2"/><path d="M183.5 72.5 L175.5 66.2 Q174 65 172.5 65 A5.3 5.3 0 0 0 172.2 75.5 L173 76"/><path d="M183.6 66.8 V72.6 H177.8"/></g><g fill="none" stroke="#cdcdcd" stroke-width="1.2"><path d="M471.6 63.6 H481.6 L484.4 66.4 V76.2 H471.6 Z"/><path d="M474.6 63.6 V67.2 H480.6 V63.6"/><path d="M474.6 76.2 V72.6 H481.6 V76.2 M478 72.6 V76.2"/></g><path d="M535.5 63.2 V76.6 L547 69.9 Z" fill="#222"/><path d="M538.1 67.2 V70.8 H541.8" fill="none" stroke="#fff" stroke-width="1"/><g fill="none" stroke="#222" stroke-width="1.1"><path d="M621.7 70 V75.5 H633.4 V70"/><path d="M623.5 74 Q623.5 67.4 628 67.4 H633.2 M629.5 64.2 L633.1 67.4 L629.5 70.6"/></g><path d="M690.90 63.20 L692.86 67.91 L697.94 68.31 L694.07 71.63 L695.25 76.59 L690.90 73.93 L686.55 76.59 L687.73 71.63 L683.86 68.31 L688.94 67.91 Z" fill="none" stroke="#222" stroke-width="1.0" stroke-linejoin="miter"/><g fill="none" stroke="#222" stroke-width="1.1"><path d="M750.8 75.3 H747.7 V62.6 H759.5 V67.8"/><path d="M751 64.6 h5.6 M751 66.6 h5.6"/><circle cx="756.2" cy="72.8" r="3.1"/><path d="M758.4 75 L760.6 77.2"/></g><g fill="none" stroke="#222" stroke-width="1.1"><circle cx="1045.4" cy="68.3" r="5.1"/><path d="M1049.1 72.1 L1051.8 74.7"/></g><g fill="none" stroke="#222" stroke-width="1.1"><rect x="1208.6" y="63.6" width="12.8" height="12.8"/><path d="M1212.4 63.6 V76.4 M1208.6 66.6 h3.8 M1208.6 69.6 h3.8 M1208.6 72.6 h3.8"/></g><path d="M1227.00 68.20 L1231.00 72.00 L1235.00 68.20" fill="none" stroke="#222" stroke-width="1.1"/><g fill="none" stroke="#222" stroke-width="1.1"><circle cx="1263.4" cy="69.8" r="7"/><path d="M1263.4 68.6 V74.2" stroke-width="1.3"/></g><circle cx="1263.4" cy="66.6" r="0.8" fill="#222"/><g fill="none" stroke="#222" stroke-width="1.1"><path d="M745.6 147.4 H742 V135.6 H752 V139.4"/><path d="M743.6 138.3 h6 M743.6 140.4 h3.5 M743.6 142.4 h2"/><circle cx="751.1" cy="144.3" r="3.1"/><path d="M753.3 146.5 L755.3 148.5"/></g><g fill="none" stroke="#222" stroke-width="1.1"><circle cx="978.3" cy="141.2" r="5.3"/><path d="M982.2 145.2 L984.8 147.6"/></g><g fill="none" stroke="#222" stroke-width="1.1"><path d="M1017.6 140.2 A5.9 5.9 0 1 0 1011.6 147.4"/></g><path d="M1015.4 140.6 h4.6 l-2.3 2.6 z" fill="#222"/><g fill="#222"><circle cx="1045.2" cy="142.4" r="1.5"/><circle cx="1050.4" cy="142.4" r="1.5"/><circle cx="1055.6" cy="142.4" r="1.5"/></g><g fill="none" stroke="#222" stroke-width="1"><rect x="1090.8" y="136.7" width="13.6" height="10.6"/><path d="M1090.8 141.3 h13.6 M1090.8 144.3 h13.6 M1095.3 138.8 v8.5 M1099.8 138.8 v8.5"/></g><rect x="1090.3" y="136.2" width="14.6" height="2.8" fill="#222"/><g stroke="#fff" stroke-width="1.1"><path d="M1130.2 137.5 h1.6 M1130.2 140.5 h1.6 M1130.2 143.5 h1.6 M1130.2 146.5 h1.6"/><path d="M1133 137.5 H1144.6 M1133 140.5 H1142.2 M1133 143.5 H1140 M1133 146.5 H1144.6"/></g><g stroke="#222" stroke-width="1.1"><path d="M1170 137.4 H1184 M1170 140.4 H1184 M1170 143.4 H1184 M1170 146.4 H1184"/></g><g fill="none" stroke="#222" stroke-width="1.1"><path d="M1210.2 146.6 L1216.4 141.2 L1218.6 143.4 L1224.2 137.6"/><path d="M1220.4 137.4 H1224.4 V141.4"/></g><g fill="none" stroke="#222" stroke-width="1.1"><circle cx="1256.5" cy="142" r="7"/><path d="M1256.5 140.8 V146.4" stroke-width="1.3"/></g><circle cx="1256.5" cy="138.8" r="0.8" fill="#222"/></svg>
<div class="ab" style="left:570px;top:504px;width:253px;height:26px;border:2px solid #2f7ff0;background:#fff"></div>
<div class="t" style="left:579px;top:510px">中文分词</div>
<div class="ab" style="left:574px;top:527px;width:249px;height:124px;background:#fff;border-radius:0 0 4px 4px;box-shadow:0 2px 6px rgba(0,0,0,0.22)"></div>
<div class="ab" style="left:574px;top:615px;width:249px;height:26px;background:#d8e9fb"></div>
<div class="ab" style="left:586px;top:544px;width:12px;height:12px;border:1px solid #bdbdbd;background:#fff"></div>
<div class="t" style="left:604px;top:541px">不分词</div>
<div class="ab" style="left:586px;top:570px;width:12px;height:12px;border:1px solid #bdbdbd;background:#fff"></div>
<div class="t" style="left:604px;top:567px">英文分词</div>
<div class="ab" style="left:586px;top:596px;width:12px;height:12px;border:1px solid #bdbdbd;background:#fff"></div>
<div class="t" style="left:604px;top:593px">拼音分词</div>
<div class="ab" style="left:586px;top:622px;width:12px;height:12px;background:#5aaaf7"></div>
<div class="t" style="left:604px;top:619px">中文分词</div>
<svg class="ab" style="left:0;top:0" width="1280" height="700" viewBox="0 0 1280 700"><path d="M807.00 515.00 L811.00 519.20 L815.00 515.00" fill="none" stroke="#333" stroke-width="1.1"/><path d="M588.5 627.5 L591 630 L595.5 625.3" fill="none" stroke="#fff" stroke-width="1.2"/></svg>
<div class="ab" style="left:0;top:0;width:1px;height:700px;background:#3d4650"></div>
</body></html>
